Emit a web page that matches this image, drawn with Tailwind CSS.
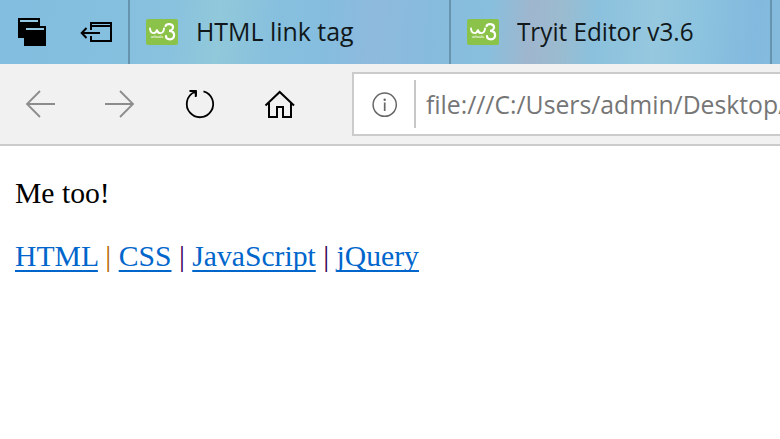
<!DOCTYPE html>
<html lang="en">
<head>
<meta charset="utf-8">
<title>HTML link tag</title>
<script src="https://cdn.jsdelivr.net/npm/@tailwindcss/browser@4"></script>
</head>
<body class="w-[780px] h-[439px] overflow-hidden bg-white flex flex-col">
<header class="h-16 shrink-0 flex overflow-hidden bg-[linear-gradient(95deg,#83bddf_0px,#86c0df_130px,#89c2de_175px,#91c8da_220px,#87c0de_275px,#85bddf_325px,#8ebadd_375px,#87bbdd_430px,#88bfdd_490px,#9fb6ce_530px,#9bbbcf_560px,#8bc1dd_595px,#96c8df_655px,#8cc3df_700px,#82b9de_755px,#86bddd_790px)] font-['Open_Sans','Noto_Sans',sans-serif] text-[25px] text-[#10181b]">
  <div class="w-32 shrink-0 flex">
    <svg class="w-[64px] h-16" viewBox="0 0 64 64" shape-rendering="crispEdges">
      <path d="M18 18H40V26H46V46H24V38H18Z" fill="#000"/>
      <path d="M20 20H38V22H20ZM26 28H44V30H26Z" fill="#94c7e2"/>
    </svg>
    <svg class="w-[64px] h-16" viewBox="64 0 64 64" fill="none" stroke="#000" stroke-width="2">
      <path d="M91 30V23H111V41H91V36M91 26H111M82 33H100"/>
      <path d="M86.500 28L81.700 33L86.500 38"/>
    </svg>
  </div>
  <div class="w-[321px] shrink-0 border-l-2 border-[#6693ad] flex items-center pl-4">
    <svg class="w-8 h-[26px] shrink-0" viewBox="0 0 32 26">
      <rect width="32" height="26" rx="2" fill="#8bc34a"/>
      <path d="M4 9.500C4.500 15.500 10.500 15.500 10.800 10.500C11.500 15.500 17.500 15.500 18 9.500" fill="none" stroke="#fff" stroke-width="1.900" stroke-linecap="round"/>
      <path d="M19.500 7C20.500 4.300 27 4.300 27 8.300C27 11 24.500 11.800 23 11.800C29.800 11.800 29.500 20.300 24 20.300C21.500 20.300 20 18.800 20 17" fill="none" stroke="#fff" stroke-width="2.200" stroke-linecap="round"/>
      <text x="5" y="19" font-size="3.500" font-weight="bold" fill="#e4f2d3" textLength="12">schools</text>
    </svg>
    <span class="ml-[18px] inline-block origin-left whitespace-pre scale-x-[0.996]">HTML link tag</span>
  </div>
  <div class="w-[321px] shrink-0 border-l-2 border-[#6693ad] flex items-center pl-4">
    <svg class="w-8 h-[26px] shrink-0" viewBox="0 0 32 26">
      <rect width="32" height="26" rx="2" fill="#8bc34a"/>
      <path d="M4 9.500C4.500 15.500 10.500 15.500 10.800 10.500C11.500 15.500 17.500 15.500 18 9.500" fill="none" stroke="#fff" stroke-width="1.900" stroke-linecap="round"/>
      <path d="M19.500 7C20.500 4.300 27 4.300 27 8.300C27 11 24.500 11.800 23 11.800C29.800 11.800 29.500 20.300 24 20.300C21.500 20.300 20 18.800 20 17" fill="none" stroke="#fff" stroke-width="2.200" stroke-linecap="round"/>
      <text x="5" y="19" font-size="3.500" font-weight="bold" fill="#e4f2d3" textLength="12">schools</text>
    </svg>
    <span class="ml-[18px] inline-block origin-left whitespace-pre scale-x-[0.97]">Tryit Editor v3.6</span>
  </div>
  <div class="w-[10px] shrink-0 border-l-2 border-[#6693ad]"></div>
</header>
<nav class="h-[82px] shrink-0 bg-[#f1f1f1] border-b-2 border-[#cbcbcb] flex pt-2">
  <div class="w-[352px] shrink-0 flex -mt-2">
    <svg class="w-20 h-20" viewBox="0 64 80 80" fill="none" stroke="#8c8c8c" stroke-width="1.800"><path d="M55 104H27M40 91L27 104L40 117"/></svg>
    <svg class="w-20 h-20" viewBox="80 64 80 80" fill="none" stroke="#8c8c8c" stroke-width="1.800"><path d="M105 104H133M120 91L133 104L120 117"/></svg>
    <svg class="w-20 h-20" viewBox="160 64 80 80" fill="none" stroke="#000" stroke-width="1.800"><path d="M203.500 91.300A13.200 13.200 0 1 1 194.500 92M189.500 91H195.700V97"/><path d="M194 91.500H196V94Z" fill="#000"/></svg>
    <svg class="w-20 h-20" viewBox="240 64 80 80" fill="none" stroke="#000" stroke-width="2"><path d="M265.500 105.500L279.700 92L294 105.500M269 103V117H277V107H283V117H291V103"/></svg>
  </div>
  <div class="w-[440px] shrink-0 h-16 border-2 border-[#cbcbcb] bg-white flex items-center">
    <svg class="w-[60px] h-[60px] shrink-0" viewBox="354 74 60 60" fill="none" stroke="#666"><circle cx="384.700" cy="104.700" r="11.600" stroke-width="1.500"/><path d="M384.700 102.500V111" stroke-width="1.700"/><circle cx="384.700" cy="99.700" r="1.200" fill="#666" stroke="none"/></svg>
    <div class="w-0.5 h-12 bg-[#c7c7c7] shrink-0"></div>
    <span class="ml-[10px] pt-0.5 inline-block origin-left whitespace-pre font-['Open_Sans','Noto_Sans',sans-serif] text-[25px] text-[#767676] scale-x-[0.99]">file:///C:/Users/admin/Desktop/</span>
  </div>
</nav>
<main class="pl-[15px] pt-[30px] font-['Liberation_Serif',serif] text-[29.67px] leading-[34px] text-black">
  <p>Me too!</p>
  <p class="mt-[29px] whitespace-nowrap [&_a]:text-[#0066cc] [&_a]:underline [&_a]:decoration-2 [&_a]:underline-offset-4 [&_a]:[text-decoration-skip-ink:none]"><a href="#">HTML</a> <span class="text-[#b56500]">|</span> <a href="#">CSS</a> <span class="text-[#330056]">|</span> <a href="#">JavaScript</a> <span class="text-[#330056]">|</span> <a href="#">jQuery</a></p>
</main>
</body>
</html>
